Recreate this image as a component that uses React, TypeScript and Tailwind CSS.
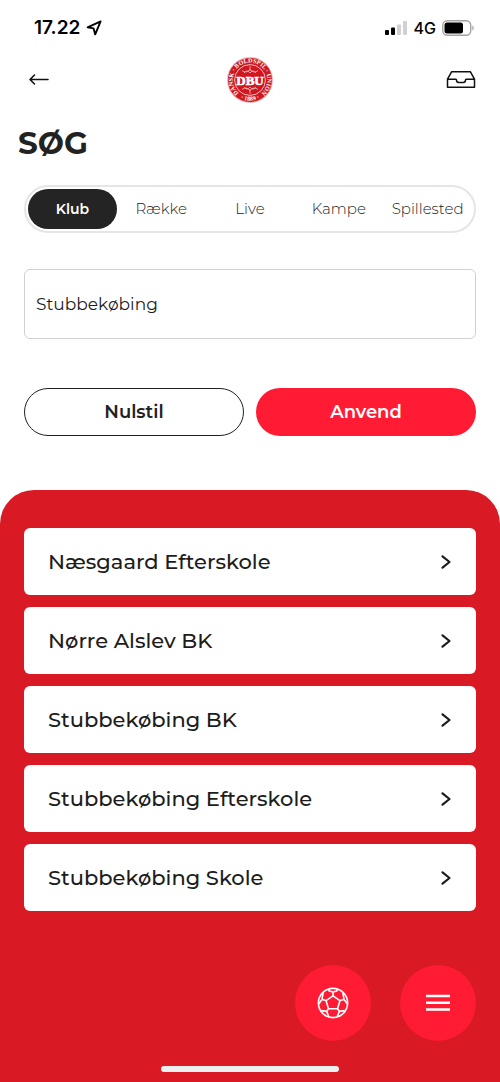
import { useState } from "react";

const tabs = ["Klub", "Række", "Live", "Kampe", "Spillested"];

const clubs = [
  "Næsgaard Efterskole",
  "Nørre Alslev BK",
  "Stubbekøbing BK",
  "Stubbekøbing Efterskole",
  "Stubbekøbing Skole",
];

function StatusBar() {
  return (
    <div className="flex h-14 items-center justify-between pl-[34px] pr-[26px] font-[Inter,sans-serif] text-black">
      <div className="flex items-center gap-[6px]">
        <span className="text-[19px] leading-6 font-semibold">17.22</span>
        <svg className="size-4" viewBox="0 0 16 16" fill="none" stroke="currentColor" strokeWidth="1.9" strokeLinejoin="round" aria-hidden="true">
          <path d="M14.600 1.400 1.600 7.400l6 1 1.600 6z" />
        </svg>
      </div>
      <div className="flex items-center gap-[6px]">
        <svg className="h-[14px] w-[23px]" viewBox="0 0 23 14" aria-hidden="true">
          <rect x="0" y="9" width="4" height="5" rx="1" />
          <rect x="6" y="6.5" width="4" height="7.5" rx="1" />
          <rect x="12" y="3.5" width="4" height="10.5" rx="1" fill="#d1d1d1" />
          <rect x="18" y="0" width="4" height="14" rx="1" fill="#d1d1d1" />
        </svg>
        <span className="text-base leading-6 font-medium">4G</span>
        <svg className="h-4 w-8" viewBox="0 0 32 16" aria-hidden="true">
          <rect x="0.75" y="0.75" width="28" height="14.5" rx="4.5" fill="none" stroke="#a3a3a3" strokeWidth="1.4" />
          <rect x="2.5" y="2.5" width="18.5" height="11" rx="2.5" />
          <path d="M30.3 5.5c1.9.8 1.9 4.2 0 5z" fill="#a3a3a3" />
        </svg>
      </div>
    </div>
  );
}

function Logo() {
  return (
    <svg className="size-12" viewBox="0 0 48 48" role="img" aria-label="DBU">
      <defs>
        <path id="ring-top" d="M14.200 38.200A17.300 17.300 0 1 1 33.800 38.200" />
        <path id="ring-bottom" d="M9.300 38.700A20.800 20.800 0 0 0 38.700 38.700" />
      </defs>
      <circle cx="24" cy="24" r="23" fill="#e9b6b8" />
      <circle cx="24" cy="24" r="22" fill="#d01720" />
      <circle cx="24" cy="24" r="15.400" fill="none" stroke="#fff" strokeWidth="0.7" />
      <g fill="none" stroke="#f3bcbf" strokeWidth="0.8">
        <path d="M16 14.500q4 3.500 8-1 4 4.500 8 1M18 17q3-4 6 0 3-4 6 0M24 10v5" />
        <path d="M16 33.500q4-3.500 8 1 4-4.500 8-1M18 31q3 4 6 0 3 4 6 0M24 33v5" />
      </g>
      <g fill="#fff" fontFamily="Liberation Serif, serif" fontWeight="700">
        <text fontSize="6.200">
          <textPath href="#ring-top" startOffset="50%" textAnchor="middle">DANSK · BOLDSPIL · UNION</textPath>
        </text>
        <text fontSize="6.200">
          <textPath href="#ring-bottom" startOffset="50%" textAnchor="middle">· 1889 ·</textPath>
        </text>
        <text x="24" y="28.500" fontSize="13" textAnchor="middle" stroke="#fff" strokeWidth="0.6">
          DBU
        </text>
      </g>
    </svg>
  );
}

function Header() {
  return (
    <header className="grid grid-cols-3 items-center px-6 text-[#111]">
      <button type="button" aria-label="Tilbage" className="justify-self-start p-1">
        <svg className="h-5 w-[22px]" viewBox="0 0 22 20" fill="none" stroke="currentColor" strokeWidth="1.6" strokeLinecap="round" strokeLinejoin="round">
          <path d="M20 9.500H2M6.500 5 2 9.500l4.500 4.500" />
        </svg>
      </button>
      <div className="justify-self-center">
        <Logo />
      </div>
      <button type="button" aria-label="Indbakke" className="justify-self-end">
        <svg className="h-5 w-[30px]" viewBox="0 0 30 20" fill="none" stroke="currentColor" strokeWidth="1.5" strokeLinejoin="round">
          <path d="M1.500 9.200 5.700 1.700h18.600l4.200 7.500v8.100h-27zM1.500 9.200h8.300c.5 0 .7.300.7.800 0 1.500.9 2.500 2.300 2.500h4.400c1.400 0 2.300-1 2.300-2.500 0-.5.2-.8.7-.8h8.300" />
        </svg>
      </button>
    </header>
  );
}

function ChevronIcon() {
  return (
    <svg className="h-4 w-3" viewBox="0 0 12 16" fill="none" stroke="currentColor" strokeWidth="2.2" strokeLinecap="round" strokeLinejoin="round" aria-hidden="true">
      <path d="m2.500 2.300 7 5.700-7 5.700" />
    </svg>
  );
}

function BallIcon() {
  return (
    <svg className="size-8" viewBox="0 0 32 32" fill="none" stroke="currentColor" strokeWidth="1.600" strokeLinejoin="round" aria-hidden="true">
      <circle cx="16" cy="16" r="14.600" />
      <path d="m16 8.900 7 4.700-2.500 8.100h-9l-2.500-8.100z" />
      <path d="M16 8.900V5M23 13.600l4-1.200M20.500 21.700l1.900 2.700M11.500 21.700l-1.900 2.700M9 13.600l-4-1.200" />
      <path d="M11.500 2.500 12.300 4 16 5l3.700-1 .8-1.500M25.800 5.300 27 12.400l3.300 4.600M5 12.400l1.200-7.100M1.700 17 5 12.400M22.400 24.400l5.400-.8M22.400 24.400l-2.200 5.400M9.600 24.400l-5.400-.8M9.600 24.400l2.200 5.400" />
    </svg>
  );
}

export default function App() {
  const [activeTab, setActiveTab] = useState("Klub");
  const [query, setQuery] = useState("Stubbekøbing");

  return (
    <div className="flex min-h-screen flex-col bg-white font-[Montserrat,Inter,sans-serif] text-[#222]">
      <StatusBar />
      <Header />

      <main className="flex flex-1 flex-col">
        <h1 className="mt-[19px] px-[18px] text-[31px] leading-10 font-bold">SØG</h1>

        <div className="px-6 pt-[22px] pb-[54px]">
          <div role="tablist" className="grid h-12 grid-cols-5 rounded-full border-2 border-[#e5e5e5] p-[2px]">
            {tabs.map((tab) => (
              <button
                key={tab}
                type="button"
                role="tab"
                aria-selected={tab === activeTab}
                onClick={() => setActiveTab(tab)}
                className={
                  tab === activeTab
                    ? "rounded-full bg-[#242424] text-sm font-semibold text-white"
                    : "rounded-full text-[15px] font-light text-[#222]"
                }
              >
                {tab}
              </button>
            ))}
          </div>

          <input
            type="text"
            aria-label="Søg"
            value={query}
            onChange={(e) => setQuery(e.target.value)}
            className="mt-9 h-[70px] w-full rounded-md border border-[#d0d0d0] px-[11px] text-[17px] text-[#1c1c1c] outline-none"
          />

          <div className="mt-[49px] grid grid-cols-2 gap-3">
            <button type="button" className="h-12 rounded-full border border-[#222] text-lg font-semibold">
              Nulstil
            </button>
            <button type="button" className="h-12 rounded-full bg-[#ff1b33] text-lg font-semibold text-white">
              Anvend
            </button>
          </div>
        </div>

        <section className="flex flex-1 flex-col rounded-t-[34px] bg-[#d91923] px-6 pt-[38px] pb-[10px]">
          <ul className="flex flex-col gap-3">
            {clubs.map((club) => (
              <li key={club}>
                <a href="#" className="flex h-[67px] items-center justify-between rounded-md bg-white px-6 text-[21px] font-medium text-[#1c1c1c]">
                  {club}
                  <ChevronIcon />
                </a>
              </li>
            ))}
          </ul>

          <div className="mt-auto flex justify-end gap-[29px] pt-10 text-white">
            <button type="button" aria-label="Kampe" className="flex size-[76px] items-center justify-center rounded-full bg-[#ff1b33]">
              <BallIcon />
            </button>
            <button type="button" aria-label="Menu" className="flex size-[76px] items-center justify-center rounded-full bg-[#ff1b33]">
              <svg className="h-5 w-6" viewBox="0 0 24 20" stroke="currentColor" strokeWidth="2.500" aria-hidden="true">
                <path d="M0 3h24M0 9.700h24M0 16.400h24" />
              </svg>
            </button>
          </div>

          <div className="mx-auto mt-[25px] h-[6px] w-[178px] rounded-full bg-[#efefef]" />
        </section>
      </main>
    </div>
  );
}
